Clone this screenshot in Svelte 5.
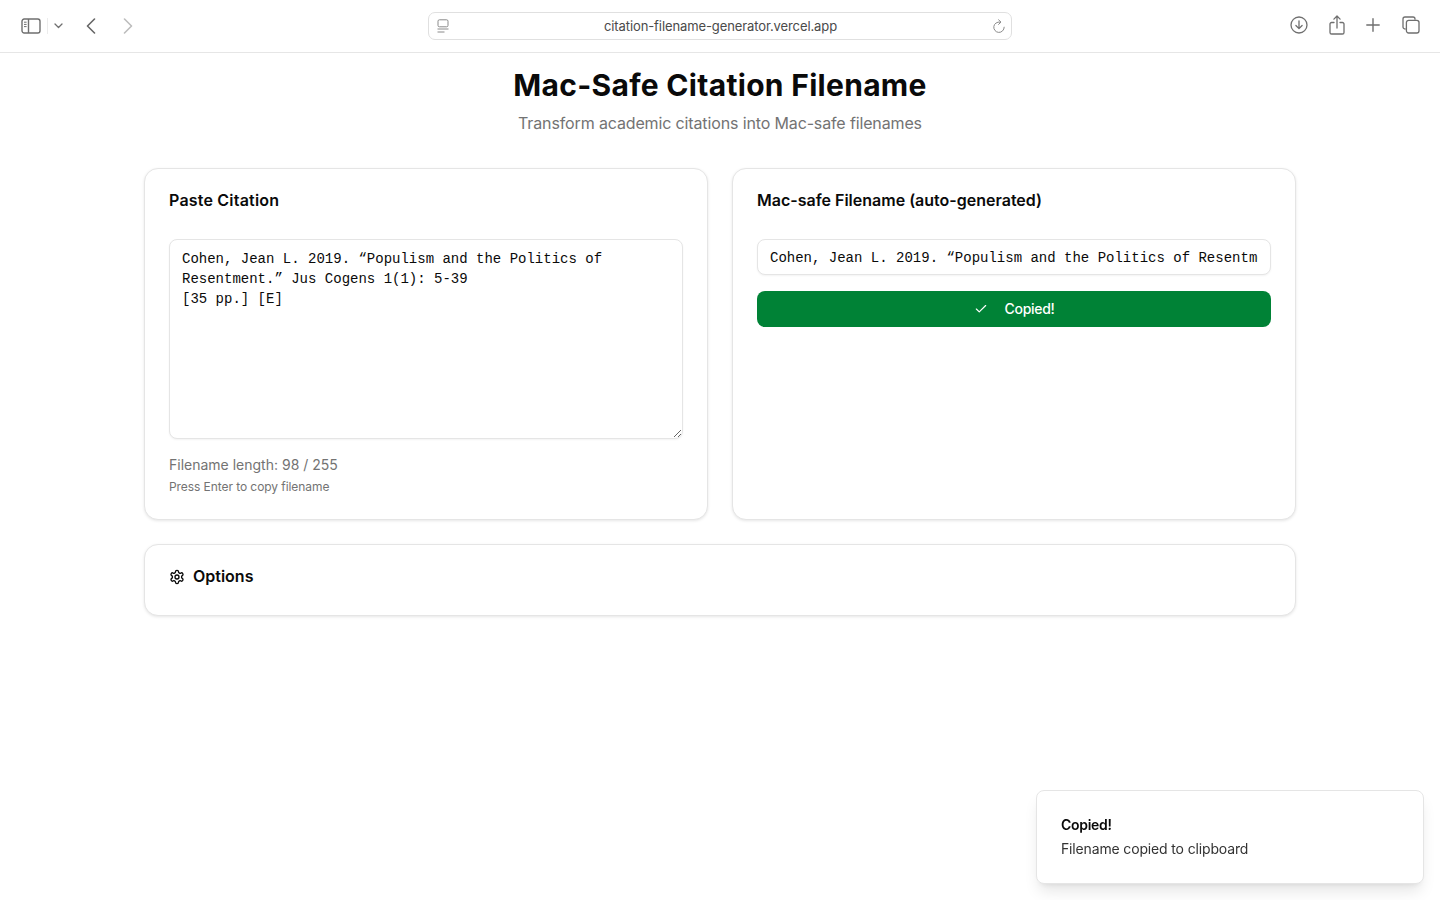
<script>
  const citation = 'Cohen, Jean L. 2019. “Populism and the Politics of Resentment.” Jus Cogens 1(1): 5-39\n[35 pp.] [E]';
  const filename = 'Cohen, Jean L. 2019. “Populism and the Politics of Resentment.” Jus Cogens 1(1): 5-39 [35 pp.] [E]';
</script>

<div class="page">
  <header class="toolbar">
    <div class="tb-left">
      <svg class="ic sidebar" width="20" height="16" viewBox="0 0 20 16" fill="none" stroke="#6f6f6f" stroke-width="1.4">
        <rect x="1" y="1" width="18" height="14" rx="2.2" />
        <path d="M7.5 1v14" />
        <path d="M3 4.2h2.6M3 6.4h2.6M3 8.6h2.6" stroke-width="1" />
      </svg>
      <span class="tb-sep"></span>
      <svg class="ic caret" width="9" height="6" viewBox="0 0 9 6" fill="none" stroke="#6f6f6f" stroke-width="1.3" stroke-linecap="round" stroke-linejoin="round"><path d="M1 1l3.5 3.5L8 1" /></svg>
      <svg class="ic back" width="10" height="16" viewBox="0 0 10 16" fill="none" stroke="#666" stroke-width="1.6" stroke-linecap="round" stroke-linejoin="round"><path d="M8.5 1L1.5 8l7 7" /></svg>
      <svg class="ic fwd" width="10" height="16" viewBox="0 0 10 16" fill="none" stroke="#bdbdbd" stroke-width="1.6" stroke-linecap="round" stroke-linejoin="round"><path d="M1.5 1l7 7-7 7" /></svg>
    </div>
    <div class="urlbar">
      <svg width="12" height="14" viewBox="0 0 12 14" fill="none" stroke="#8a8a8a" stroke-width="1"><rect x="1" y=".8" width="10" height="7" rx="1.4" /><path d="M.5 10h11M.5 13h7" /></svg>
      <span class="url">citation-filename-generator.vercel.app</span>
      <svg width="14" height="15" viewBox="0 0 14 15" fill="none" stroke="#8a8a8a" stroke-width="1" stroke-linecap="round" stroke-linejoin="round"><path d="M8 3.1A5.2 5.2 0 1 0 12.2 8.2" /><path d="M6.6 .8L9 3.1 6.6 5.4" /></svg>
    </div>
    <div class="tb-right">
      <svg width="18" height="18" viewBox="0 0 18 18" fill="none" stroke="#6f6f6f" stroke-width="1.3" stroke-linecap="round" stroke-linejoin="round"><circle cx="9" cy="9" r="8" /><path d="M9 4.8v7.6M5.9 9.5L9 12.6l3.1-3.1" /></svg>
      <svg width="16" height="20" viewBox="0 0 16 20" fill="none" stroke="#6f6f6f" stroke-width="1.3" stroke-linecap="round" stroke-linejoin="round"><path d="M5 7.5H2.6A1.6 1.6 0 0 0 1 9.1v8.3A1.6 1.6 0 0 0 2.6 19h10.8a1.6 1.6 0 0 0 1.6-1.6V9.1a1.6 1.6 0 0 0-1.6-1.6H11" /><path d="M8 13V1.2M4.9 4.1L8 1l3.1 3.1" /></svg>
      <svg width="14" height="14" viewBox="0 0 14 14" fill="none" stroke="#6f6f6f" stroke-width="1.4" stroke-linecap="round"><path d="M7 .8v12.4M.8 7h12.4" /></svg>
      <svg class="tabs" width="18" height="18" viewBox="0 0 18 18" fill="none" stroke="#6f6f6f" stroke-width="1.3"><path d="M3.6 13H3a2 2 0 0 1-2-2V3a2 2 0 0 1 2-2h8a2 2 0 0 1 2 2v.7" /><rect x="4.4" y="4.4" width="12.6" height="12.6" rx="2.2" /></svg>
    </div>
  </header>

  <main class="main">
    <h1>Mac-Safe Citation Filename</h1>
    <p class="sub">Transform academic citations into Mac-safe filenames</p>

    <div class="grid">
      <section class="card">
        <h2 class="paste">Paste Citation</h2>
        <textarea class="mono ta" value={citation} spellcheck="false"></textarea>
        <p class="len">Filename length: 98 / 255</p>
        <p class="hint">Press Enter to copy filename</p>
      </section>
      <section class="card">
        <h2>Mac-safe Filename (auto-generated)</h2>
        <input class="mono inp" value={filename} readonly />
        <button class="copy">
          <svg width="14" height="14" viewBox="0 0 24 24" fill="none" stroke="#fff" stroke-width="2" stroke-linecap="round" stroke-linejoin="round"><path d="M20 6L9 17l-5-5" /></svg>
          <span>Copied!</span>
        </button>
      </section>
    </div>

    <section class="card options">
      <svg width="16" height="16" viewBox="0 0 24 24" fill="none" stroke="#0a0a0a" stroke-width="2" stroke-linecap="round" stroke-linejoin="round"><path d="M12.22 2h-.44a2 2 0 0 0-2 2v.18a2 2 0 0 1-1 1.73l-.43.25a2 2 0 0 1-2 0l-.15-.08a2 2 0 0 0-2.73.73l-.22.38a2 2 0 0 0 .73 2.73l.15.1a2 2 0 0 1 1 1.72v.51a2 2 0 0 1-1 1.74l-.15.09a2 2 0 0 0-.73 2.73l.22.38a2 2 0 0 0 2.73.73l.15-.08a2 2 0 0 1 2 0l.43.25a2 2 0 0 1 1 1.73V20a2 2 0 0 0 2 2h.44a2 2 0 0 0 2-2v-.18a2 2 0 0 1 1-1.73l.43-.25a2 2 0 0 1 2 0l.15.08a2 2 0 0 0 2.73-.73l.22-.39a2 2 0 0 0-.73-2.73l-.15-.08a2 2 0 0 1-1-1.74v-.5a2 2 0 0 1 1-1.74l.15-.09a2 2 0 0 0 .73-2.73l-.22-.38a2 2 0 0 0-2.73-.73l-.15.08a2 2 0 0 1-2 0l-.43-.25a2 2 0 0 1-1-1.73V4a2 2 0 0 0-2-2z" /><circle cx="12" cy="12" r="3" /></svg>
      <h2>Options</h2>
    </section>
  </main>

  <aside class="toast">
    <div class="toast-title">Copied!</div>
    <div class="toast-desc">Filename copied to clipboard</div>
  </aside>
</div>

<style>
  :global(body) {
    margin: 0;
    background: #fff;
    color: #0a0a0a;
    font-family: Inter, "Liberation Sans", sans-serif;
  }
  .page { min-height: 900px; box-sizing: border-box; }
  .toolbar {
    height: 52px;
    border-bottom: 1px solid #e6e6e6;
    display: grid;
    grid-template-columns: 1fr 584px 1fr;
    align-items: center;
    padding: 0 20px;
    box-sizing: content-box;
    width: 1400px;
  }
  .tb-left { display: flex; align-items: center; padding: 0 0 1px 1px; }
  .ic { display: block; flex: none; }
  .tb-sep { width: 1px; height: 16px; background: #ececec; margin-left: 6px; }
  .caret { margin-left: 6px; }
  .back { margin-left: 23px; }
  .fwd { margin-left: 27px; }
  .urlbar {
    height: 26px;
    border: 1px solid #e0e0e0;
    border-radius: 7px;
    display: flex;
    align-items: center;
    justify-content: space-between;
    padding: 0 5px 0 8px;
  }
  .url { font-size: 13px; letter-spacing: -0.1px; color: #4a4a4a; }
  .tb-right { display: flex; align-items: center; justify-content: flex-end; gap: 21px; padding: 0 0 2px 0; }
  .tabs { margin-left: 1px; }
  .main { width: 1152px; margin: 0 auto; }
  h1 {
    margin: 0;
    padding-top: 14px;
    font-size: 30px;
    line-height: 36px;
    font-weight: 700;
    letter-spacing: 0.3px;
    text-align: center;
  }
  .sub {
    margin: 8px 0 0;
    font-size: 16px;
    line-height: 24px;
    letter-spacing: -0.135px;
    color: #737373;
    text-align: center;
  }
  .grid {
    margin-top: 33px;
    display: grid;
    grid-template-columns: 1fr 1fr;
    gap: 24px;
  }
  .card {
    background: #fff;
    border: 1px solid #e5e5e5;
    border-radius: 14px;
    padding: 24px;
    box-shadow: 0 1px 3px rgba(0,0,0,.1);
    min-width: 0;
  }
  .grid .card { height: 352px; box-sizing: border-box; }
  h2 {
    margin: 0;
    font-size: 16px;
    line-height: 14px;
    font-weight: 600;
  }
  .paste { letter-spacing: 0.2px; }
  .mono { font-family: "Liberation Mono", monospace; font-size: 14px; color: #0a0a0a; }
  .ta {
    display: block;
    box-sizing: border-box;
    width: 100%;
    height: 200px;
    margin-top: 32px;
    padding: 9px 12px 7px;
    line-height: 20px;
    border: 1px solid #e5e5e5;
    border-radius: 8px;
    outline: none;
    resize: vertical;
    box-shadow: 0 1px 2px rgba(0,0,0,.05);
  }
  .len { margin: 16px 0 0; font-size: 14px; line-height: 20px; color: #737373; }
  .hint { margin: 4px 0 0; font-size: 12px; line-height: 16px; letter-spacing: -0.07px; color: #737373; }
  .inp {
    display: block;
    box-sizing: border-box;
    width: 100%;
    height: 36px;
    margin-top: 32px;
    padding: 5px 12px 3px;
    border: 1px solid #e5e5e5;
    border-radius: 8px;
    outline: none;
    box-shadow: 0 1px 2px rgba(0,0,0,.05);
  }
  .copy {
    width: 100%;
    height: 36px;
    margin-top: 16px;
    padding: 0 0 1px;
    border: 0;
    border-radius: 8px;
    background: #008236;
    color: #fff;
    font: 500 14px Inter, "Liberation Sans", sans-serif;
    letter-spacing: -0.3px;
    display: flex;
    align-items: center;
    justify-content: center;
    gap: 17px;
  }
  .options {
    margin-top: 24px;
    height: 72px;
    box-sizing: border-box;
    display: flex;
    align-items: flex-start;
    gap: 8px;
  }
  .toast {
    position: fixed;
    right: 16px;
    bottom: 16px;
    width: 388px;
    height: 94px;
    box-sizing: border-box;
    background: #fff;
    border: 1px solid #e5e5e5;
    border-radius: 8px;
    padding: 24px;
    box-shadow: 0 10px 15px -3px rgba(0,0,0,.1), 0 4px 6px -4px rgba(0,0,0,.1);
  }
  .toast-title { font-size: 14px; line-height: 20px; font-weight: 600; letter-spacing: -0.3px; }
  .toast-desc { font-size: 14px; line-height: 20px; margin-top: 4px; letter-spacing: -0.15px; color: #333; }
</style>
